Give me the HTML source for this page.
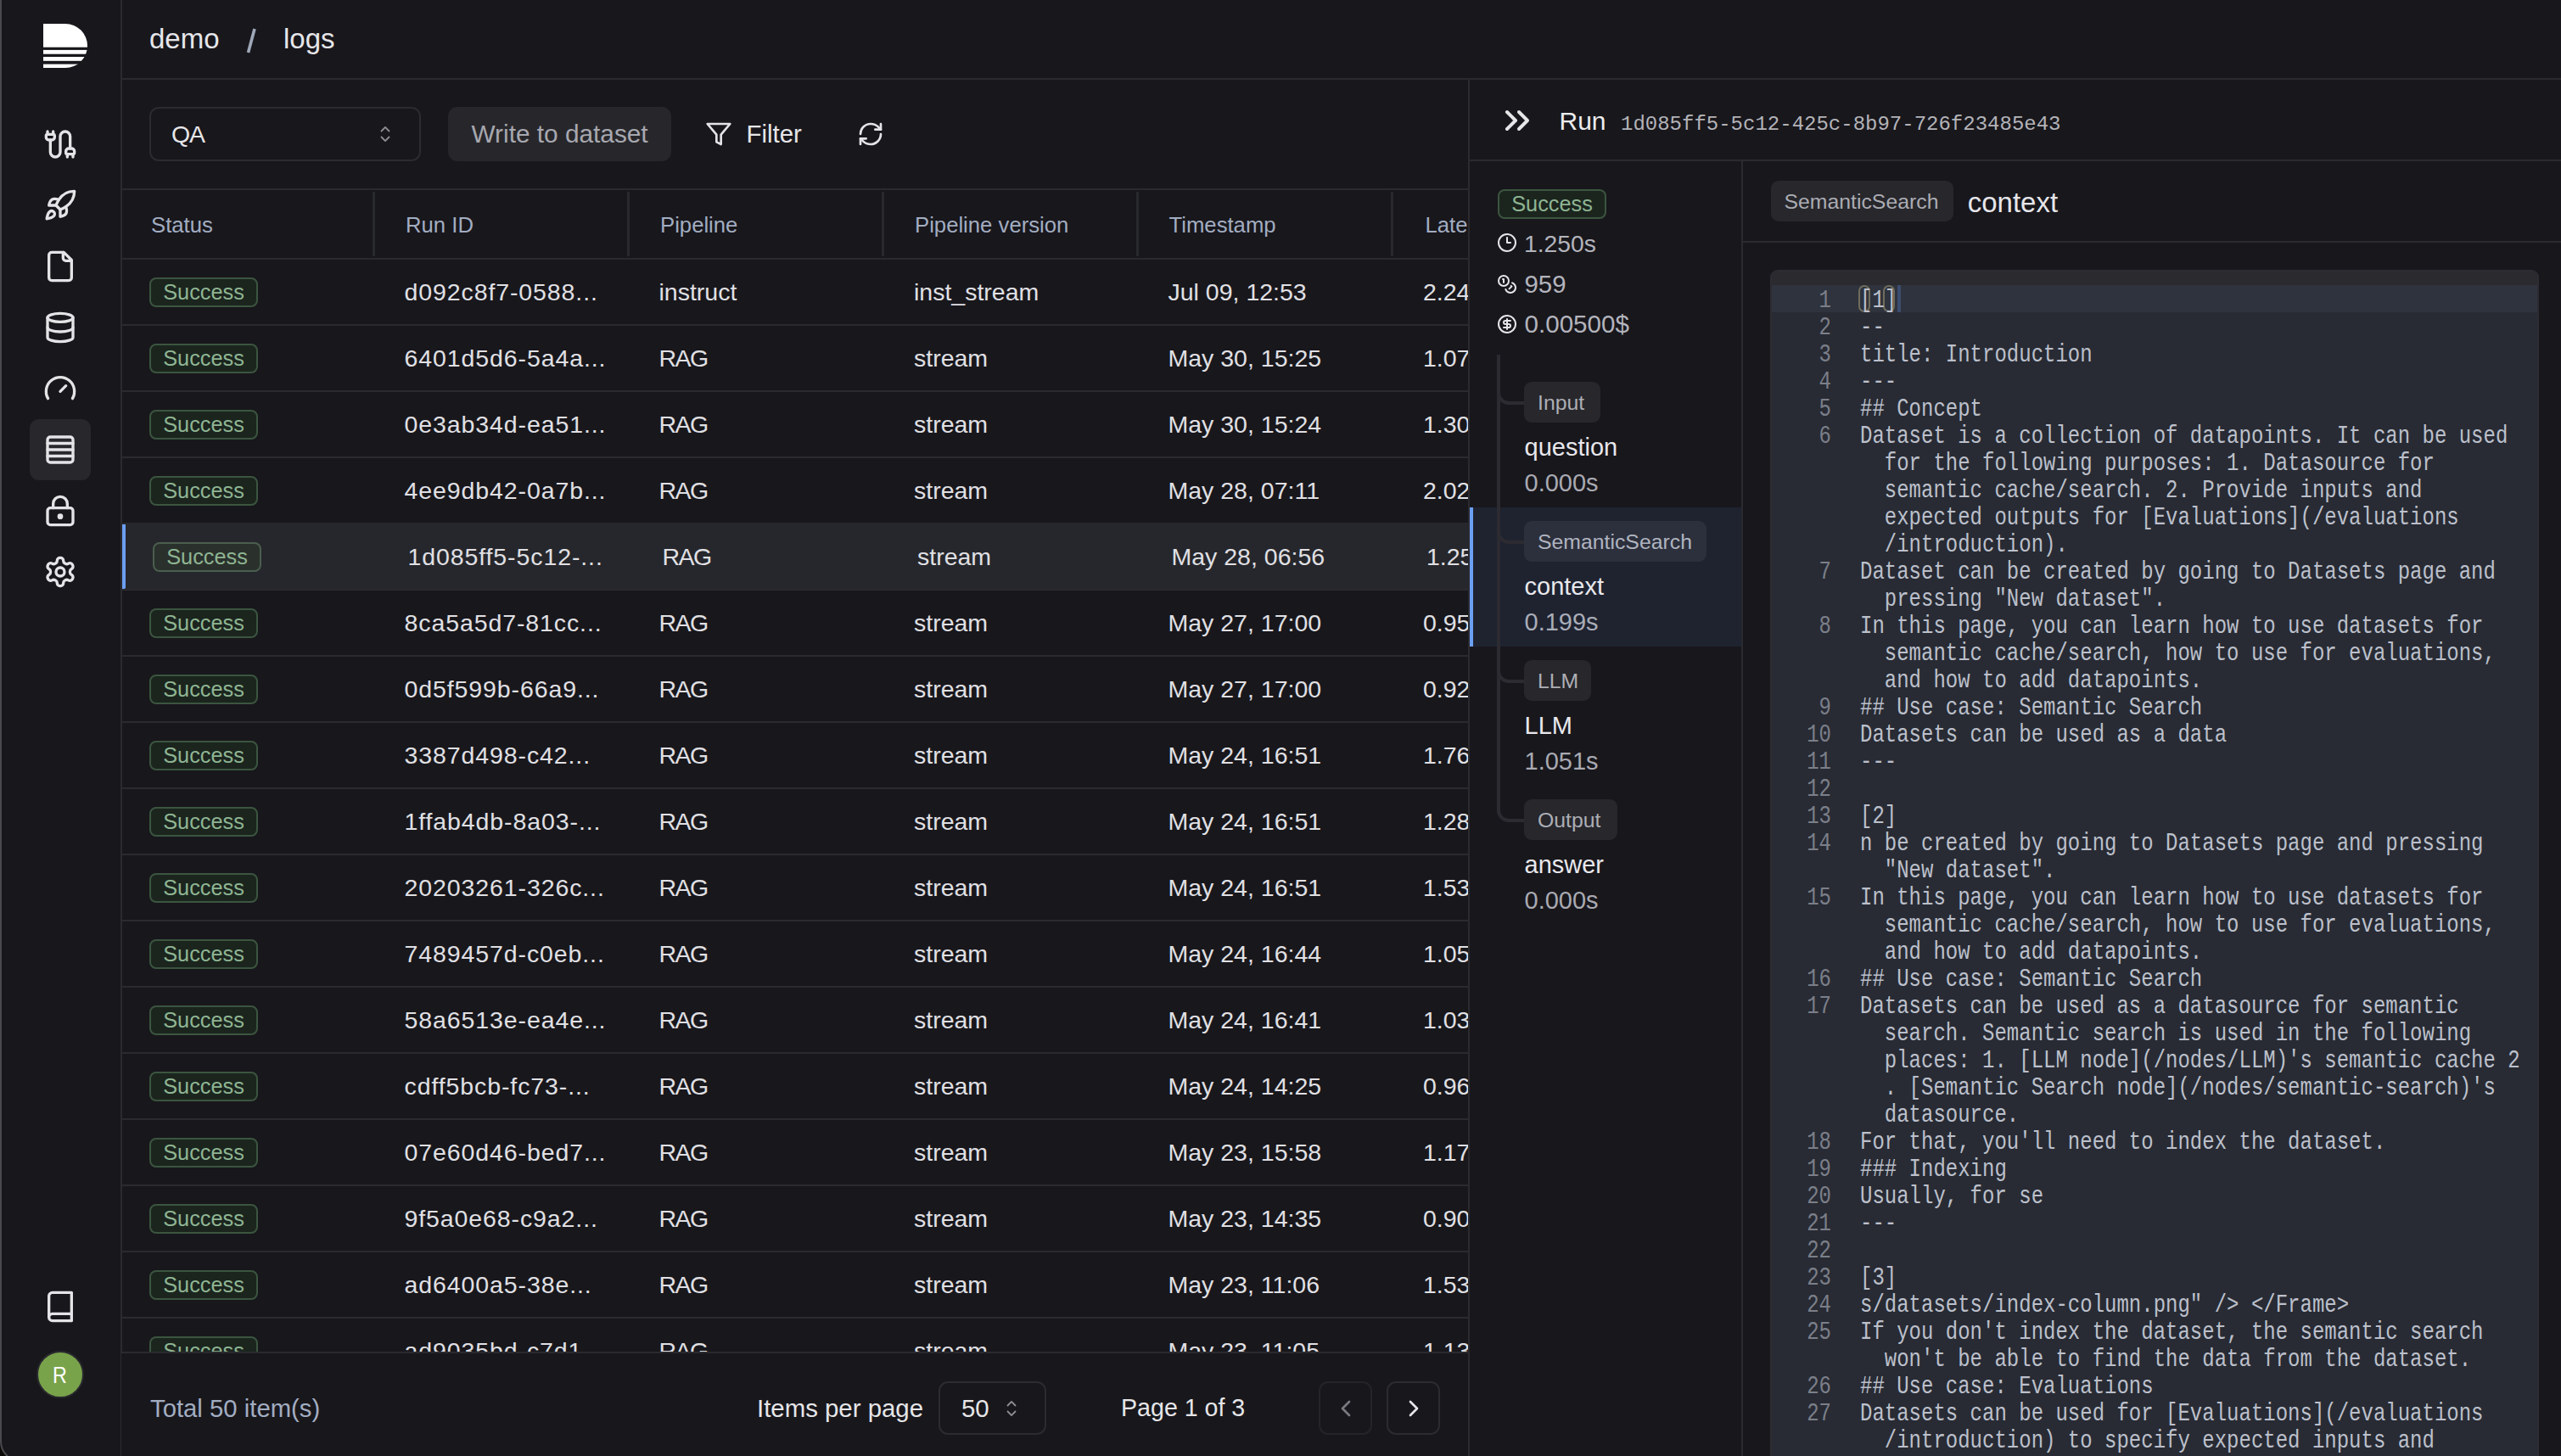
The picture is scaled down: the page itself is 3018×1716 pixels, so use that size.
<!DOCTYPE html>
<html><head><meta charset="utf-8"><style>
*{box-sizing:border-box;margin:0;padding:0}
html,body{width:3018px;height:1716px;overflow:hidden;background:#18171c}
body{position:relative;font-family:"Liberation Sans",sans-serif;color:#e6e6e8}
.abs{position:absolute}
.t{position:absolute;white-space:pre;line-height:1}
.win{position:absolute;left:0;top:-40px;width:3060px;height:1756px;border-left:2px solid #4a4a4e;border-bottom-left-radius:22px;background:#18171c}
.corner{position:absolute;left:0;top:1680px;width:40px;height:36px;background:#0a0a08}
.hl{position:absolute;height:2px;background:#2a2a2f}
.vl{position:absolute;width:2px;background:#2a2a2f}
.ico{position:absolute;fill:none;stroke:#e4e4e7;stroke-width:2;stroke-linecap:round;stroke-linejoin:round}
.badge{position:absolute;height:35px;width:128px;border:2px solid #3b553f;background:#1b251e;border-radius:8px;color:#8fb593;font-size:25.3px;line-height:31px;text-align:center}
.cell{position:absolute;font-size:28.5px;white-space:pre;line-height:1;color:#e5e5e8}
.hdr{position:absolute;font-size:25.7px;white-space:pre;line-height:1;color:#a0aec2}
.tag{position:absolute;height:48px;background:#27272c;border-radius:9px;color:#abacb3;font-size:24.8px;line-height:50.5px;padding:0 16px;white-space:pre}
.code{font-family:"Liberation Mono",monospace;font-size:24px;line-height:32px;height:32px;white-space:pre;color:#bcc0cb;transform:translateY(2.5px) scaleY(1.26);transform-origin:50% 50%}
.ln{position:absolute;left:0;width:72px;text-align:right;color:#7b7f89}
</style></head>
<body>
<div class="abs" style="left:0;top:1680px;width:30px;height:36px;background:#0b0a08"></div>
<div class="abs" style="left:0;top:-100px;width:3200px;height:1823px;border-left:2px solid #4a4a4e;border-bottom:2px solid #4a4a4e;border-bottom-left-radius:24px;background:#18171c"></div>
<div class="vl" style="left:142px;top:0;height:1716px"></div>
<svg class="abs" style="left:0;top:0" width="143" height="100" viewBox="0 0 143 100">
<path d="M51 28 H77 A26 26 0 0 1 77 80 H51 Z" fill="#ffffff"/>
<rect x="48" y="55.7" width="60" height="3.2" fill="#18171c"/>
<rect x="48" y="63.7" width="60" height="3.3" fill="#18171c"/>
<rect x="48" y="71.8" width="60" height="3.8" fill="#18171c"/>
</svg>
<div class="abs" style="left:35px;top:494px;width:72px;height:72px;background:#27272c;border-radius:11px"></div>
<svg class="ico" style="left:51.0px;top:150.0px;width:40px;height:40px;stroke:#e4e4e7" viewBox="0 0 24 24" stroke-width="2"><path d="M17 21v-2a1 1 0 0 1-1-1v-1a2 2 0 0 1 2-2h2a2 2 0 0 1 2 2v1a1 1 0 0 1-1 1"/><path d="M19 15V6.5a1 1 0 0 0-7 0v11a1 1 0 0 1-7 0V9"/><path d="M21 21v-2h-4"/><path d="M3 5h4V3"/><path d="M7 5a1 1 0 0 1 1 1v1a2 2 0 0 1-2 2H4a2 2 0 0 1-2-2V6a1 1 0 0 1 1-1V3"/></svg>
<svg class="ico" style="left:51.0px;top:222.0px;width:40px;height:40px;stroke:#e4e4e7" viewBox="0 0 24 24" stroke-width="2"><path d="M4.5 16.5c-1.5 1.26-2 5-2 5s3.74-.5 5-2c.71-.84.7-2.13-.09-2.91a2.18 2.18 0 0 0-2.91-.09z"/><path d="m12 15-3-3a22 22 0 0 1 2-3.95A12.88 12.88 0 0 1 22 2c0 2.72-.78 7.5-6 11a22.35 22.35 0 0 1-4 2z"/><path d="M9 12H4s.55-3.03 2-4c1.62-1.08 5 0 5 0"/><path d="M12 15v5s3.03-.55 4-2c1.08-1.62 0-5 0-5"/></svg>
<svg class="ico" style="left:51.0px;top:294.0px;width:40px;height:40px;stroke:#e4e4e7" viewBox="0 0 24 24" stroke-width="2"><path d="M14.5 2H6a2 2 0 0 0-2 2v16a2 2 0 0 0 2 2h12a2 2 0 0 0 2-2V7.5L14.5 2z"/><path d="M14 2v4a2 2 0 0 0 2 2h4"/></svg>
<svg class="ico" style="left:51.0px;top:366.0px;width:40px;height:40px;stroke:#e4e4e7" viewBox="0 0 24 24" stroke-width="2"><ellipse cx="12" cy="5" rx="9" ry="3"/><path d="M3 5V19A9 3 0 0 0 21 19V5"/><path d="M3 12A9 3 0 0 0 21 12"/></svg>
<svg class="ico" style="left:51.0px;top:438.0px;width:40px;height:40px;stroke:#e4e4e7" viewBox="0 0 24 24" stroke-width="2"><path d="m12 14 4-4"/><path d="M3.34 19a10 10 0 1 1 17.32 0"/></svg>
<svg class="ico" style="left:51.0px;top:510.0px;width:40px;height:40px;stroke:#e4e4e7" viewBox="0 0 24 24" stroke-width="2"><rect width="18" height="18" x="3" y="3" rx="2"/><path d="M21 7.5H3"/><path d="M21 12H3"/><path d="M21 16.5H3"/></svg>
<svg class="ico" style="left:51.0px;top:582.0px;width:40px;height:40px;stroke:#e4e4e7" viewBox="0 0 24 24" stroke-width="2"><circle cx="12" cy="16" r="1"/><rect x="3" y="10" width="18" height="12" rx="2"/><path d="M7 10V7a5 5 0 0 1 10 0v3"/></svg>
<svg class="ico" style="left:51.0px;top:654.0px;width:40px;height:40px;stroke:#e4e4e7" viewBox="0 0 24 24" stroke-width="2"><path d="M12.22 2h-.44a2 2 0 0 0-2 2v.18a2 2 0 0 1-1 1.73l-.43.25a2 2 0 0 1-2 0l-.15-.08a2 2 0 0 0-2.73.73l-.22.38a2 2 0 0 0 .73 2.73l.15.1a2 2 0 0 1 1 1.72v.51a2 2 0 0 1-1 1.74l-.15.09a2 2 0 0 0-.73 2.73l.22.38a2 2 0 0 0 2.73.73l.15-.08a2 2 0 0 1 2 0l.43.25a2 2 0 0 1 1 1.73V20a2 2 0 0 0 2 2h.44a2 2 0 0 0 2-2v-.18a2 2 0 0 1 1-1.73l.43-.25a2 2 0 0 1 2 0l.15.08a2 2 0 0 0 2.73-.73l.22-.39a2 2 0 0 0-.73-2.73l-.15-.08a2 2 0 0 1-1-1.74v-.5a2 2 0 0 1 1-1.74l.15-.09a2 2 0 0 0 .73-2.73l-.22-.38a2 2 0 0 0-2.73-.73l-.15.08a2 2 0 0 1-2 0l-.43-.25a2 2 0 0 1-1-1.73V4a2 2 0 0 0-2-2z"/><circle cx="12" cy="12" r="3"/></svg>
<svg class="ico" style="left:51.0px;top:1520.0px;width:40px;height:40px;stroke:#e4e4e7" viewBox="0 0 24 24" stroke-width="2"><path d="M4 19.5v-15A2.5 2.5 0 0 1 6.5 2H20v20H6.5a2.5 2.5 0 0 1 0-5H20"/></svg>
<div class="abs" style="left:43px;top:1591.5px;width:56px;height:56px;border-radius:50%;background:#79a34a;border:2px solid #2a2a2f"></div>
<div class="t" style="left:62px;top:1607.22px;font-size:27.5px;color:#ffffff;transform:scaleX(0.85);transform-origin:0 0;">R</div>

<div class="t" style="left:176px;top:29.07px;font-size:33px;color:#e6e6ea;">demo</div>
<svg class="abs" style="left:280px;top:25px" width="30" height="45"><path d="M20 9 L12.5 37" stroke="#9ea8b8" stroke-width="3.6" stroke-linecap="butt"/></svg>
<div class="t" style="left:334px;top:29.07px;font-size:33px;color:#e6e6ea;">logs</div>
<div class="hl" style="left:143px;top:92px;width:2875px"></div>
<div class="abs" style="left:176px;top:126px;width:320px;height:64px;border:2px solid #2b2b30;border-radius:11px"></div>
<div class="t" style="left:202px;top:143.87px;font-size:28.5px;color:#e6e6e8;letter-spacing:-1.2px;">QA</div>
<svg class="ico" style="left:439.0px;top:143.0px;width:30px;height:30px;stroke:#e4e4e7" viewBox="0 0 15 15" stroke-width="2"><path d="M4.93 5.43a.45.45 0 0 0 0 .64.45.45 0 0 0 .64 0L7.5 4.14l1.93 1.93a.45.45 0 0 0 .64 0 .45.45 0 0 0 0-.64L7.82 3.18a.45.45 0 0 0-.64 0zM10.07 9.57a.45.45 0 0 0 0-.64.45.45 0 0 0-.64 0L7.5 10.86 5.57 8.93a.45.45 0 0 0-.64 0 .45.45 0 0 0 0 .64l2.25 2.25a.45.45 0 0 0 .64 0z" fill="#8e8e93" stroke="none"/></svg>
<div class="abs" style="left:528px;top:126px;width:263px;height:64px;background:#27272b;border-radius:11px"></div>
<div class="t" style="left:555.5px;top:142.77px;font-size:29.8px;color:#a7a8b0;">Write to dataset</div>
<svg class="ico" style="left:831.0px;top:141.8px;width:32px;height:32px;stroke:#e4e4e7" viewBox="0 0 24 24" stroke-width="2"><polygon points="22 3 2 3 10 12.46 10 19 14 21 14 12.46 22 3"/></svg>
<div class="t" style="left:879.5px;top:143.11px;font-size:29.4px;color:#e6e6e8;">Filter</div>
<svg class="ico" style="left:1009.5999999999999px;top:141.8px;width:32px;height:32px;stroke:#e4e4e7" viewBox="0 0 24 24" stroke-width="2"><path d="M3 12a9 9 0 0 1 9-9 9.75 9.75 0 0 1 6.74 2.74L21 8"/><path d="M21 3v5h-5"/><path d="M21 12a9 9 0 0 1-9 9 9.75 9.75 0 0 1-6.74-2.74L3 16"/><path d="M8 16H3v5"/></svg>
<div class="abs" style="left:0;top:0;width:1730px;height:1594px;overflow:hidden">
<div class="hl" style="left:143px;top:222px;width:1588px"></div>
<div class="hdr" style="left:178px;top:253.04px;font-size:25.7px;color:#a2adc1;">Status</div>
<div class="hdr" style="left:478px;top:253.04px;font-size:25.7px;color:#a2adc1;">Run ID</div>
<div class="hdr" style="left:778px;top:253.04px;font-size:25.7px;color:#a2adc1;">Pipeline</div>
<div class="hdr" style="left:1078px;top:253.04px;font-size:25.7px;color:#a2adc1;">Pipeline version</div>
<div class="hdr" style="left:1377.5px;top:253.04px;font-size:25.7px;color:#a2adc1;">Timestamp</div>
<div class="hdr" style="left:1679.5px;top:253.04px;font-size:25.7px;color:#a2adc1;">Late</div>
<div class="vl" style="left:439px;top:226px;width:3px;height:76px;background:#28292d"></div>
<div class="vl" style="left:739px;top:226px;width:3px;height:76px;background:#28292d"></div>
<div class="vl" style="left:1039px;top:226px;width:3px;height:76px;background:#28292d"></div>
<div class="vl" style="left:1339px;top:226px;width:3px;height:76px;background:#28292d"></div>
<div class="vl" style="left:1639px;top:226px;width:3px;height:76px;background:#28292d"></div>
<div class="hl" style="left:143px;top:304px;width:1588px"></div>
<div class="badge" style="left:176px;top:326.5px;">Success</div>
<div class="cell" style="left:476.5px;top:329.87px;font-size:28.5px;color:#e0e0e4;letter-spacing:0.9px;">d092c8f7-0588...</div>
<div class="cell" style="left:776.5px;top:329.87px;font-size:28.5px;color:#e0e0e4;">instruct</div>
<div class="cell" style="left:1077px;top:329.87px;font-size:28.5px;color:#e0e0e4;">inst_stream</div>
<div class="cell" style="left:1376.5px;top:329.87px;font-size:28.5px;color:#e0e0e4;">Jul 09, 12:53</div>
<div class="cell" style="left:1677px;top:329.87px;font-size:28.5px;color:#e0e0e4;">2.24</div>
<div class="hl" style="left:143px;top:382px;width:1588px"></div>
<div class="badge" style="left:176px;top:404.5px;">Success</div>
<div class="cell" style="left:476.5px;top:407.87px;font-size:28.5px;color:#e0e0e4;letter-spacing:0.9px;">6401d5d6-5a4a...</div>
<div class="cell" style="left:776.5px;top:407.87px;font-size:28.5px;color:#e0e0e4;letter-spacing:-1.6px;">RAG</div>
<div class="cell" style="left:1077px;top:407.87px;font-size:28.5px;color:#e0e0e4;">stream</div>
<div class="cell" style="left:1376.5px;top:407.87px;font-size:28.5px;color:#e0e0e4;">May 30, 15:25</div>
<div class="cell" style="left:1677px;top:407.87px;font-size:28.5px;color:#e0e0e4;">1.07s</div>
<div class="hl" style="left:143px;top:460px;width:1588px"></div>
<div class="badge" style="left:176px;top:482.5px;">Success</div>
<div class="cell" style="left:476.5px;top:485.87px;font-size:28.5px;color:#e0e0e4;letter-spacing:0.9px;">0e3ab34d-ea51...</div>
<div class="cell" style="left:776.5px;top:485.87px;font-size:28.5px;color:#e0e0e4;letter-spacing:-1.6px;">RAG</div>
<div class="cell" style="left:1077px;top:485.87px;font-size:28.5px;color:#e0e0e4;">stream</div>
<div class="cell" style="left:1376.5px;top:485.87px;font-size:28.5px;color:#e0e0e4;">May 30, 15:24</div>
<div class="cell" style="left:1677px;top:485.87px;font-size:28.5px;color:#e0e0e4;">1.30</div>
<div class="hl" style="left:143px;top:538px;width:1588px"></div>
<div class="badge" style="left:176px;top:560.5px;">Success</div>
<div class="cell" style="left:476.5px;top:563.87px;font-size:28.5px;color:#e0e0e4;letter-spacing:0.9px;">4ee9db42-0a7b...</div>
<div class="cell" style="left:776.5px;top:563.87px;font-size:28.5px;color:#e0e0e4;letter-spacing:-1.6px;">RAG</div>
<div class="cell" style="left:1077px;top:563.87px;font-size:28.5px;color:#e0e0e4;">stream</div>
<div class="cell" style="left:1376.5px;top:563.87px;font-size:28.5px;color:#e0e0e4;">May 28, 07:11</div>
<div class="cell" style="left:1677px;top:563.87px;font-size:28.5px;color:#e0e0e4;">2.02</div>
<div class="hl" style="left:143px;top:616px;width:1588px"></div>
<div class="abs" style="left:143px;top:616px;width:1588px;height:80px;background:#26272c"></div>
<div class="abs" style="left:144px;top:618px;width:4px;height:78px;background:#6b9ff2;clip-path:polygon(0 0,100% 0,100% 96%,0 100%)"></div>
<div class="badge" style="left:180px;top:638.5px;background:#2a312c;border-color:#4a5e4e;">Success</div>
<div class="cell" style="left:480.5px;top:641.87px;font-size:28.5px;color:#e0e0e4;letter-spacing:0.9px;">1d085ff5-5c12-...</div>
<div class="cell" style="left:780.5px;top:641.87px;font-size:28.5px;color:#e0e0e4;letter-spacing:-1.6px;">RAG</div>
<div class="cell" style="left:1081px;top:641.87px;font-size:28.5px;color:#e0e0e4;">stream</div>
<div class="cell" style="left:1380.5px;top:641.87px;font-size:28.5px;color:#e0e0e4;">May 28, 06:56</div>
<div class="cell" style="left:1681px;top:641.87px;font-size:28.5px;color:#e0e0e4;">1.25</div>
<div class="hl" style="left:143px;top:694px;width:1588px"></div>
<div class="badge" style="left:176px;top:716.5px;">Success</div>
<div class="cell" style="left:476.5px;top:719.87px;font-size:28.5px;color:#e0e0e4;letter-spacing:0.9px;">8ca5a5d7-81cc...</div>
<div class="cell" style="left:776.5px;top:719.87px;font-size:28.5px;color:#e0e0e4;letter-spacing:-1.6px;">RAG</div>
<div class="cell" style="left:1077px;top:719.87px;font-size:28.5px;color:#e0e0e4;">stream</div>
<div class="cell" style="left:1376.5px;top:719.87px;font-size:28.5px;color:#e0e0e4;">May 27, 17:00</div>
<div class="cell" style="left:1677px;top:719.87px;font-size:28.5px;color:#e0e0e4;">0.95</div>
<div class="hl" style="left:143px;top:772px;width:1588px"></div>
<div class="badge" style="left:176px;top:794.5px;">Success</div>
<div class="cell" style="left:476.5px;top:797.87px;font-size:28.5px;color:#e0e0e4;letter-spacing:0.9px;">0d5f599b-66a9...</div>
<div class="cell" style="left:776.5px;top:797.87px;font-size:28.5px;color:#e0e0e4;letter-spacing:-1.6px;">RAG</div>
<div class="cell" style="left:1077px;top:797.87px;font-size:28.5px;color:#e0e0e4;">stream</div>
<div class="cell" style="left:1376.5px;top:797.87px;font-size:28.5px;color:#e0e0e4;">May 27, 17:00</div>
<div class="cell" style="left:1677px;top:797.87px;font-size:28.5px;color:#e0e0e4;">0.92</div>
<div class="hl" style="left:143px;top:850px;width:1588px"></div>
<div class="badge" style="left:176px;top:872.5px;">Success</div>
<div class="cell" style="left:476.5px;top:875.87px;font-size:28.5px;color:#e0e0e4;letter-spacing:0.9px;">3387d498-c42...</div>
<div class="cell" style="left:776.5px;top:875.87px;font-size:28.5px;color:#e0e0e4;letter-spacing:-1.6px;">RAG</div>
<div class="cell" style="left:1077px;top:875.87px;font-size:28.5px;color:#e0e0e4;">stream</div>
<div class="cell" style="left:1376.5px;top:875.87px;font-size:28.5px;color:#e0e0e4;">May 24, 16:51</div>
<div class="cell" style="left:1677px;top:875.87px;font-size:28.5px;color:#e0e0e4;">1.76s</div>
<div class="hl" style="left:143px;top:928px;width:1588px"></div>
<div class="badge" style="left:176px;top:950.5px;">Success</div>
<div class="cell" style="left:476.5px;top:953.87px;font-size:28.5px;color:#e0e0e4;letter-spacing:0.9px;">1ffab4db-8a03-...</div>
<div class="cell" style="left:776.5px;top:953.87px;font-size:28.5px;color:#e0e0e4;letter-spacing:-1.6px;">RAG</div>
<div class="cell" style="left:1077px;top:953.87px;font-size:28.5px;color:#e0e0e4;">stream</div>
<div class="cell" style="left:1376.5px;top:953.87px;font-size:28.5px;color:#e0e0e4;">May 24, 16:51</div>
<div class="cell" style="left:1677px;top:953.87px;font-size:28.5px;color:#e0e0e4;">1.28</div>
<div class="hl" style="left:143px;top:1006px;width:1588px"></div>
<div class="badge" style="left:176px;top:1028.5px;">Success</div>
<div class="cell" style="left:476.5px;top:1031.87px;font-size:28.5px;color:#e0e0e4;letter-spacing:0.9px;">20203261-326c...</div>
<div class="cell" style="left:776.5px;top:1031.87px;font-size:28.5px;color:#e0e0e4;letter-spacing:-1.6px;">RAG</div>
<div class="cell" style="left:1077px;top:1031.87px;font-size:28.5px;color:#e0e0e4;">stream</div>
<div class="cell" style="left:1376.5px;top:1031.87px;font-size:28.5px;color:#e0e0e4;">May 24, 16:51</div>
<div class="cell" style="left:1677px;top:1031.87px;font-size:28.5px;color:#e0e0e4;">1.53</div>
<div class="hl" style="left:143px;top:1084px;width:1588px"></div>
<div class="badge" style="left:176px;top:1106.5px;">Success</div>
<div class="cell" style="left:476.5px;top:1109.87px;font-size:28.5px;color:#e0e0e4;letter-spacing:0.9px;">7489457d-c0eb...</div>
<div class="cell" style="left:776.5px;top:1109.87px;font-size:28.5px;color:#e0e0e4;letter-spacing:-1.6px;">RAG</div>
<div class="cell" style="left:1077px;top:1109.87px;font-size:28.5px;color:#e0e0e4;">stream</div>
<div class="cell" style="left:1376.5px;top:1109.87px;font-size:28.5px;color:#e0e0e4;">May 24, 16:44</div>
<div class="cell" style="left:1677px;top:1109.87px;font-size:28.5px;color:#e0e0e4;">1.05</div>
<div class="hl" style="left:143px;top:1162px;width:1588px"></div>
<div class="badge" style="left:176px;top:1184.5px;">Success</div>
<div class="cell" style="left:476.5px;top:1187.87px;font-size:28.5px;color:#e0e0e4;letter-spacing:0.9px;">58a6513e-ea4e...</div>
<div class="cell" style="left:776.5px;top:1187.87px;font-size:28.5px;color:#e0e0e4;letter-spacing:-1.6px;">RAG</div>
<div class="cell" style="left:1077px;top:1187.87px;font-size:28.5px;color:#e0e0e4;">stream</div>
<div class="cell" style="left:1376.5px;top:1187.87px;font-size:28.5px;color:#e0e0e4;">May 24, 16:41</div>
<div class="cell" style="left:1677px;top:1187.87px;font-size:28.5px;color:#e0e0e4;">1.03</div>
<div class="hl" style="left:143px;top:1240px;width:1588px"></div>
<div class="badge" style="left:176px;top:1262.5px;">Success</div>
<div class="cell" style="left:476.5px;top:1265.87px;font-size:28.5px;color:#e0e0e4;letter-spacing:0.9px;">cdff5bcb-fc73-...</div>
<div class="cell" style="left:776.5px;top:1265.87px;font-size:28.5px;color:#e0e0e4;letter-spacing:-1.6px;">RAG</div>
<div class="cell" style="left:1077px;top:1265.87px;font-size:28.5px;color:#e0e0e4;">stream</div>
<div class="cell" style="left:1376.5px;top:1265.87px;font-size:28.5px;color:#e0e0e4;">May 24, 14:25</div>
<div class="cell" style="left:1677px;top:1265.87px;font-size:28.5px;color:#e0e0e4;">0.96</div>
<div class="hl" style="left:143px;top:1318px;width:1588px"></div>
<div class="badge" style="left:176px;top:1340.5px;">Success</div>
<div class="cell" style="left:476.5px;top:1343.87px;font-size:28.5px;color:#e0e0e4;letter-spacing:0.9px;">07e60d46-bed7...</div>
<div class="cell" style="left:776.5px;top:1343.87px;font-size:28.5px;color:#e0e0e4;letter-spacing:-1.6px;">RAG</div>
<div class="cell" style="left:1077px;top:1343.87px;font-size:28.5px;color:#e0e0e4;">stream</div>
<div class="cell" style="left:1376.5px;top:1343.87px;font-size:28.5px;color:#e0e0e4;">May 23, 15:58</div>
<div class="cell" style="left:1677px;top:1343.87px;font-size:28.5px;color:#e0e0e4;">1.17s</div>
<div class="hl" style="left:143px;top:1396px;width:1588px"></div>
<div class="badge" style="left:176px;top:1418.5px;">Success</div>
<div class="cell" style="left:476.5px;top:1421.87px;font-size:28.5px;color:#e0e0e4;letter-spacing:0.9px;">9f5a0e68-c9a2...</div>
<div class="cell" style="left:776.5px;top:1421.87px;font-size:28.5px;color:#e0e0e4;letter-spacing:-1.6px;">RAG</div>
<div class="cell" style="left:1077px;top:1421.87px;font-size:28.5px;color:#e0e0e4;">stream</div>
<div class="cell" style="left:1376.5px;top:1421.87px;font-size:28.5px;color:#e0e0e4;">May 23, 14:35</div>
<div class="cell" style="left:1677px;top:1421.87px;font-size:28.5px;color:#e0e0e4;">0.90</div>
<div class="hl" style="left:143px;top:1474px;width:1588px"></div>
<div class="badge" style="left:176px;top:1496.5px;">Success</div>
<div class="cell" style="left:476.5px;top:1499.87px;font-size:28.5px;color:#e0e0e4;letter-spacing:0.9px;">ad6400a5-38e...</div>
<div class="cell" style="left:776.5px;top:1499.87px;font-size:28.5px;color:#e0e0e4;letter-spacing:-1.6px;">RAG</div>
<div class="cell" style="left:1077px;top:1499.87px;font-size:28.5px;color:#e0e0e4;">stream</div>
<div class="cell" style="left:1376.5px;top:1499.87px;font-size:28.5px;color:#e0e0e4;">May 23, 11:06</div>
<div class="cell" style="left:1677px;top:1499.87px;font-size:28.5px;color:#e0e0e4;">1.53</div>
<div class="hl" style="left:143px;top:1552px;width:1588px"></div>
<div class="badge" style="left:176px;top:1574.5px;">Success</div>
<div class="cell" style="left:476.5px;top:1577.87px;font-size:28.5px;color:#e0e0e4;letter-spacing:0.9px;">ad9035bd-c7d1...</div>
<div class="cell" style="left:776.5px;top:1577.87px;font-size:28.5px;color:#e0e0e4;letter-spacing:-1.6px;">RAG</div>
<div class="cell" style="left:1077px;top:1577.87px;font-size:28.5px;color:#e0e0e4;">stream</div>
<div class="cell" style="left:1376.5px;top:1577.87px;font-size:28.5px;color:#e0e0e4;">May 23, 11:05</div>
<div class="cell" style="left:1677px;top:1577.87px;font-size:28.5px;color:#e0e0e4;">1.13s</div>
</div>
<div class="abs" style="left:143px;top:1595px;width:1588px;height:121px;background:#18171c"></div>
<div class="hl" style="left:143px;top:1593px;width:1588px"></div>
<div class="t" style="left:177px;top:1645.20px;font-size:29.3px;color:#a2adc1;">Total 50 item(s)</div>
<div class="t" style="left:892px;top:1644.61px;font-size:29.4px;color:#e6e6e8;">Items per page</div>
<div class="abs" style="left:1106px;top:1628px;width:127px;height:63px;border:2px solid #2b2b30;border-radius:11px"></div>
<div class="t" style="left:1133px;top:1644.61px;font-size:29.4px;color:#e6e6e8;">50</div>
<svg class="ico" style="left:1177.0px;top:1644.5px;width:30px;height:30px;stroke:#e4e4e7" viewBox="0 0 15 15" stroke-width="2"><path d="M4.93 5.43a.45.45 0 0 0 0 .64.45.45 0 0 0 .64 0L7.5 4.14l1.93 1.93a.45.45 0 0 0 .64 0 .45.45 0 0 0 0-.64L7.82 3.18a.45.45 0 0 0-.64 0zM10.07 9.57a.45.45 0 0 0 0-.64.45.45 0 0 0-.64 0L7.5 10.86 5.57 8.93a.45.45 0 0 0-.64 0 .45.45 0 0 0 0 .64l2.25 2.25a.45.45 0 0 0 .64 0z" fill="#8e8e93" stroke="none"/></svg>
<div class="t" style="left:1321px;top:1645.29px;font-size:28.6px;color:#e6e6e8;">Page 1 of 3</div>
<div class="abs" style="left:1554px;top:1628px;width:63px;height:63px;border:2px solid #242429;border-radius:11px"></div>
<div class="abs" style="left:1634px;top:1628px;width:63px;height:63px;border:2px solid #2b2b30;border-radius:11px"></div>
<svg class="ico" style="left:1569.5px;top:1643.5px;width:32px;height:32px;stroke:#7a7a80" viewBox="0 0 24 24" stroke-width="2"><path d="m15 18-6-6 6-6"/></svg>
<svg class="ico" style="left:1649.5px;top:1643.5px;width:32px;height:32px;stroke:#e6e6e8" viewBox="0 0 24 24" stroke-width="2"><path d="m9 18 6-6-6-6"/></svg>

<div class="vl" style="left:1730px;top:93px;height:1623px"></div>
<svg class="ico" style="left:1764.0px;top:117.69999999999999px;width:48px;height:48px;stroke:#e6e6e8" viewBox="0 0 24 24" stroke-width="2"><path d="m6 17 5-5-5-5"/><path d="m13 17 5-5-5-5"/></svg>
<div class="t" style="left:1837.5px;top:128.00px;font-size:30px;color:#ececee;">Run</div>
<div class="t" style="left:1910px;top:135.18px;font-size:24px;color:#b3b3b8;font-family:'Liberation Mono',monospace;">1d085ff5-5c12-425c-8b97-726f23485e43</div>
<div class="hl" style="left:1731px;top:188px;width:1287px"></div>
<div class="vl" style="left:2052px;top:189px;height:1527px"></div>
<div class="badge" style="left:1765px;top:223px;">Success</div>
<svg class="ico" style="left:1764.0px;top:274.0px;width:24px;height:24px;stroke:#e6e6e8" viewBox="0 0 24 24" stroke-width="2"><circle cx="12" cy="12" r="10"/><path d="M12 6v6h4"/></svg>
<div class="t" style="left:1796px;top:272.64px;font-size:28.3px;color:#b3b4bc;">1.250s</div>
<svg class="ico" style="left:1764.0px;top:322.5px;width:24px;height:24px;stroke:#e6e6e8" viewBox="0 0 24 24" stroke-width="2"><circle cx="8" cy="8" r="6"/><path d="M18.09 10.37A6 6 0 1 1 10.34 18"/><path d="M7 6h1v4"/><path d="m16.71 13.88.7.71-2.82 2.82"/></svg>
<div class="t" style="left:1796.5px;top:319.61px;font-size:29.4px;color:#b3b4bc;">959</div>
<svg class="ico" style="left:1764.0px;top:370.0px;width:24px;height:24px;stroke:#e6e6e8" viewBox="0 0 24 24" stroke-width="2"><circle cx="12" cy="12" r="10"/><path d="M16 8h-6a2 2 0 1 0 0 4h4a2 2 0 1 1 0 4H8"/><path d="M12 18V6"/></svg>
<div class="t" style="left:1796.5px;top:366.94px;font-size:29.6px;color:#b3b4bc;">0.00500$</div>
<div class="abs" style="left:1732px;top:598px;width:320px;height:164px;background:#1f2330"></div>
<div class="abs" style="left:1732px;top:598px;width:4px;height:164px;background:#6b9ff2"></div>
<div class="abs" style="left:1764px;top:418px;width:4px;height:540px;background:#2c2b31"></div>
<div class="abs" style="left:1764px;top:460.7px;width:32px;height:16px;border-left:4px solid #2c2b31;border-bottom:4px solid #2c2b31;border-bottom-left-radius:14px"></div>
<div class="tag" style="left:1796px;top:450px;width:89.7px;background:#27272c;color:#adaeb4">Input</div>
<div class="t" style="left:1796.5px;top:513.45px;font-size:29px;color:#e8e8ec;">question</div>
<div class="t" style="left:1796.5px;top:554.95px;font-size:29px;color:#a9aab2;">0.000s</div>
<div class="abs" style="left:1764px;top:624.7px;width:32px;height:16px;border-left:4px solid #2c2b31;border-bottom:4px solid #2c2b31;border-bottom-left-radius:14px"></div>
<div class="tag" style="left:1796px;top:614px;width:215px;background:#2c303c;color:#b0b4c0">SemanticSearch</div>
<div class="t" style="left:1796.5px;top:677.45px;font-size:29px;color:#e8e8ec;">context</div>
<div class="t" style="left:1796.5px;top:718.95px;font-size:29px;color:#a9adb8;">0.199s</div>
<div class="abs" style="left:1764px;top:788.7px;width:32px;height:16px;border-left:4px solid #2c2b31;border-bottom:4px solid #2c2b31;border-bottom-left-radius:14px"></div>
<div class="tag" style="left:1796px;top:778px;width:79px;background:#27272c;color:#adaeb4">LLM</div>
<div class="t" style="left:1796.5px;top:841.45px;font-size:29px;color:#e8e8ec;">LLM</div>
<div class="t" style="left:1796.5px;top:882.95px;font-size:29px;color:#a9aab2;">1.051s</div>
<div class="abs" style="left:1764px;top:952.7px;width:32px;height:16px;border-left:4px solid #2c2b31;border-bottom:4px solid #2c2b31;border-bottom-left-radius:14px"></div>
<div class="tag" style="left:1796px;top:942px;width:109.6px;background:#27272c;color:#adaeb4">Output</div>
<div class="t" style="left:1796.5px;top:1005.45px;font-size:29px;color:#e8e8ec;">answer</div>
<div class="t" style="left:1796.5px;top:1046.95px;font-size:29px;color:#a9aab2;">0.000s</div>
<div class="tag" style="left:2086.5px;top:213px;width:215px;height:48px">SemanticSearch</div>
<div class="t" style="left:2318.7px;top:221.77px;font-size:33px;color:#e6e6ea;">context</div>
<div class="hl" style="left:2053px;top:284px;width:965px"></div>
<div class="abs" style="left:2086px;top:318px;width:906px;height:1500px;background:#282b34;border:2px solid #2c2c32;border-radius:9px;overflow:hidden">
<div class="abs" style="left:0;top:0;width:902px;height:16px;background:#2a2a2f"></div>
<div class="abs" style="left:0;top:16px;width:902px;height:32px;background:#2f333d"></div>
<div class="abs" style="left:148px;top:16px;width:4px;height:32px;background:#3b4d6e"></div>
<div class="abs" style="left:102px;top:16px;width:14.4px;height:32px;border:2px solid #6f6d5c;border-radius:7px"></div>
<div class="abs" style="left:131px;top:16px;width:14.4px;height:32px;border:2px solid #6f6d5c;border-radius:7px"></div>
<div class="code abs ln" style="top:16px;left:0;width:70px">1</div>
<div class="code abs" style="top:16px;left:104px">[1]</div>
<div class="code abs ln" style="top:48px;left:0;width:70px">2</div>
<div class="code abs" style="top:48px;left:104px">--</div>
<div class="code abs ln" style="top:80px;left:0;width:70px">3</div>
<div class="code abs" style="top:80px;left:104px">title: Introduction</div>
<div class="code abs ln" style="top:112px;left:0;width:70px">4</div>
<div class="code abs" style="top:112px;left:104px">---</div>
<div class="code abs ln" style="top:144px;left:0;width:70px">5</div>
<div class="code abs" style="top:144px;left:104px">## Concept</div>
<div class="code abs ln" style="top:176px;left:0;width:70px">6</div>
<div class="code abs" style="top:176px;left:104px">Dataset is a collection of datapoints. It can be used</div>
<div class="code abs" style="top:208px;left:104px">  for the following purposes: 1. Datasource for</div>
<div class="code abs" style="top:240px;left:104px">  semantic cache/search. 2. Provide inputs and</div>
<div class="code abs" style="top:272px;left:104px">  expected outputs for [Evaluations](/evaluations</div>
<div class="code abs" style="top:304px;left:104px">  /introduction).</div>
<div class="code abs ln" style="top:336px;left:0;width:70px">7</div>
<div class="code abs" style="top:336px;left:104px">Dataset can be created by going to Datasets page and</div>
<div class="code abs" style="top:368px;left:104px">  pressing "New dataset".</div>
<div class="code abs ln" style="top:400px;left:0;width:70px">8</div>
<div class="code abs" style="top:400px;left:104px">In this page, you can learn how to use datasets for</div>
<div class="code abs" style="top:432px;left:104px">  semantic cache/search, how to use for evaluations,</div>
<div class="code abs" style="top:464px;left:104px">  and how to add datapoints.</div>
<div class="code abs ln" style="top:496px;left:0;width:70px">9</div>
<div class="code abs" style="top:496px;left:104px">## Use case: Semantic Search</div>
<div class="code abs ln" style="top:528px;left:0;width:70px">10</div>
<div class="code abs" style="top:528px;left:104px">Datasets can be used as a data</div>
<div class="code abs ln" style="top:560px;left:0;width:70px">11</div>
<div class="code abs" style="top:560px;left:104px">---</div>
<div class="code abs ln" style="top:592px;left:0;width:70px">12</div>
<div class="code abs" style="top:592px;left:104px"></div>
<div class="code abs ln" style="top:624px;left:0;width:70px">13</div>
<div class="code abs" style="top:624px;left:104px">[2]</div>
<div class="code abs ln" style="top:656px;left:0;width:70px">14</div>
<div class="code abs" style="top:656px;left:104px">n be created by going to Datasets page and pressing</div>
<div class="code abs" style="top:688px;left:104px">  "New dataset".</div>
<div class="code abs ln" style="top:720px;left:0;width:70px">15</div>
<div class="code abs" style="top:720px;left:104px">In this page, you can learn how to use datasets for</div>
<div class="code abs" style="top:752px;left:104px">  semantic cache/search, how to use for evaluations,</div>
<div class="code abs" style="top:784px;left:104px">  and how to add datapoints.</div>
<div class="code abs ln" style="top:816px;left:0;width:70px">16</div>
<div class="code abs" style="top:816px;left:104px">## Use case: Semantic Search</div>
<div class="code abs ln" style="top:848px;left:0;width:70px">17</div>
<div class="code abs" style="top:848px;left:104px">Datasets can be used as a datasource for semantic</div>
<div class="code abs" style="top:880px;left:104px">  search. Semantic search is used in the following</div>
<div class="code abs" style="top:912px;left:104px">  places: 1. [LLM node](/nodes/LLM)'s semantic cache 2</div>
<div class="code abs" style="top:944px;left:104px">  . [Semantic Search node](/nodes/semantic-search)'s</div>
<div class="code abs" style="top:976px;left:104px">  datasource.</div>
<div class="code abs ln" style="top:1008px;left:0;width:70px">18</div>
<div class="code abs" style="top:1008px;left:104px">For that, you'll need to index the dataset.</div>
<div class="code abs ln" style="top:1040px;left:0;width:70px">19</div>
<div class="code abs" style="top:1040px;left:104px">### Indexing</div>
<div class="code abs ln" style="top:1072px;left:0;width:70px">20</div>
<div class="code abs" style="top:1072px;left:104px">Usually, for se</div>
<div class="code abs ln" style="top:1104px;left:0;width:70px">21</div>
<div class="code abs" style="top:1104px;left:104px">---</div>
<div class="code abs ln" style="top:1136px;left:0;width:70px">22</div>
<div class="code abs" style="top:1136px;left:104px"></div>
<div class="code abs ln" style="top:1168px;left:0;width:70px">23</div>
<div class="code abs" style="top:1168px;left:104px">[3]</div>
<div class="code abs ln" style="top:1200px;left:0;width:70px">24</div>
<div class="code abs" style="top:1200px;left:104px">s/datasets/index-column.png" /&gt; &lt;/Frame&gt;</div>
<div class="code abs ln" style="top:1232px;left:0;width:70px">25</div>
<div class="code abs" style="top:1232px;left:104px">If you don't index the dataset, the semantic search</div>
<div class="code abs" style="top:1264px;left:104px">  won't be able to find the data from the dataset.</div>
<div class="code abs ln" style="top:1296px;left:0;width:70px">26</div>
<div class="code abs" style="top:1296px;left:104px">## Use case: Evaluations</div>
<div class="code abs ln" style="top:1328px;left:0;width:70px">27</div>
<div class="code abs" style="top:1328px;left:104px">Datasets can be used for [Evaluations](/evaluations</div>
<div class="code abs" style="top:1360px;left:104px">  /introduction) to specify expected inputs and</div>
<div class="code abs ln" style="top:1392px;left:0;width:70px">28</div>
<div class="code abs" style="top:1392px;left:104px">outputs</div>
</div>

</body></html>
